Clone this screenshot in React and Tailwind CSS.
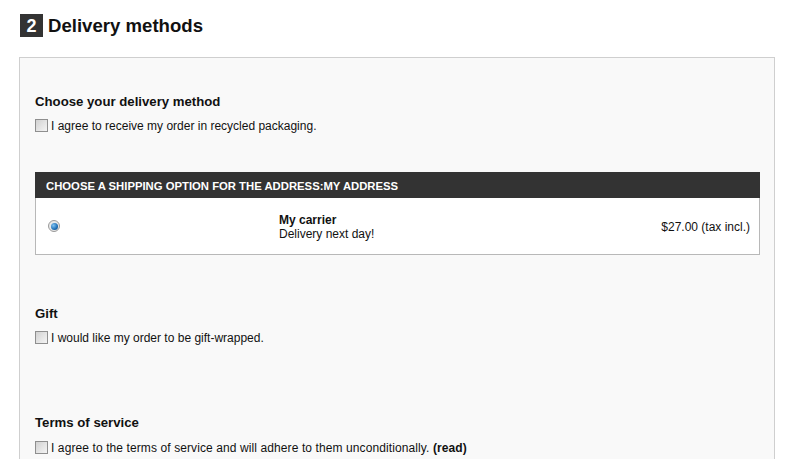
import React from "react";

function Checkbox() {
  return (
    <span className="inline-block w-[13px] h-[13px] shrink-0 border border-[#8f8f8f] bg-gradient-to-br from-[#d2d2d2] to-[#f4f4f4] box-border" />
  );
}

function Radio() {
  return (
    <span className="inline-flex items-center justify-center w-[12px] h-[12px] rounded-full border border-[#9a9a9a] bg-[#e8e8e8] box-border">
      <span className="block w-[7px] h-[7px] rounded-full bg-[radial-gradient(circle_at_35%_35%,#7fc2f2,#1f6fb5_60%,#0b3f73)]" />
    </span>
  );
}

export default function App() {
  return (
    <div
      className="w-[785px] h-[459px] overflow-hidden bg-white text-[#111] text-[12px]"
      style={{ fontFamily: '"Liberation Sans", Arial, sans-serif' }}
    >
      <div className="pl-[20px] pt-[14px] flex items-center h-[37px] box-border">
        <span className="flex items-center justify-center w-[23px] h-[23px] bg-[#333] text-white font-bold text-[18px] leading-none">
          2
        </span>
        <span className="ml-[5px] font-bold text-[18.6px] leading-[23px] text-[#111]">
          Delivery methods
        </span>
      </div>

      <div className="ml-[19px] mt-[20px] w-[756px] h-[420px] border border-[#cfcfcf] bg-[#f9f9f9] pl-[15px] pr-[14px] pt-[36px] box-border">
        <h3 className="font-bold text-[13.2px] leading-[16px]">
          Choose your delivery method
        </h3>
        <label className="mt-[9px] flex items-center h-[13px] gap-[3px] leading-[13px]">
          <Checkbox />
          <span className="pt-[1px]">I agree to receive my order in recycled packaging.</span>
        </label>

        <div className="mt-[40px] w-[725px]">
          <div className="h-[26px] bg-[#333] text-white font-bold text-[11.3px] leading-[26px] pt-[1px] pl-[11px] uppercase box-border">
            Choose a shipping option for the address:My address
          </div>
          <div className="h-[57px] border border-t-0 border-[#b8b8b8] bg-white flex items-center box-border">
            <div className="w-[243px] pl-[12px] flex items-center">
              <Radio />
            </div>
            <div className="flex-1 leading-[14px] pt-[2px]">
              <div className="font-bold">My carrier</div>
              <div>Delivery next day!</div>
            </div>
            <div className="pr-[9px] pt-[1px]">$27.00 (tax incl.)</div>
          </div>
        </div>

        <h3 className="mt-[51px] font-bold text-[13.2px] leading-[16px]">Gift</h3>
        <label className="mt-[9px] flex items-center h-[13px] gap-[3px] leading-[13px]">
          <Checkbox />
          <span className="pt-[1px]">I would like my order to be gift-wrapped.</span>
        </label>

        <h3 className="mt-[71px] font-bold text-[13.2px] leading-[16px]">
          Terms of service
        </h3>
        <label className="mt-[10px] flex items-center h-[13px] gap-[3px] leading-[13px]">
          <Checkbox />
          <span className="pt-[1px] tracking-[0.1px]">
            I agree to the terms of service and will adhere to them unconditionally.{" "}
            <span className="font-bold">(read)</span>
          </span>
        </label>
      </div>
    </div>
  );
}
